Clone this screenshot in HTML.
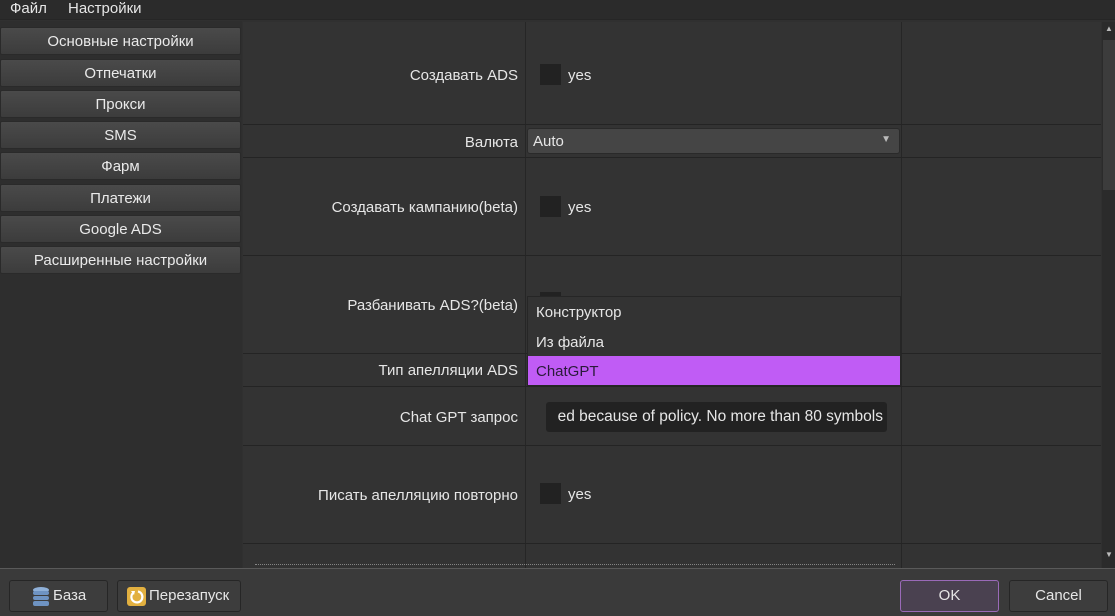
<!DOCTYPE html><html><head><meta charset="utf-8"><style>
*{box-sizing:border-box;margin:0;padding:0}
body{width:1115px;height:616px;background:#303030;font-family:"Liberation Sans",sans-serif;font-size:15px;color:#e6e6e6;position:relative;overflow:hidden}
.a{position:absolute}
.menu{left:0;top:0;width:1115px;height:20px;background:#2b2b2b;border-bottom:1px solid #262626}
.lb{left:0;width:241px;height:28px;background:linear-gradient(#4a4a4a,#3c3c3c);border:1px solid #2a2a2a;border-radius:2px;text-align:center;line-height:27px;color:#eaeaea}
.hl{height:1px;background:#242424;left:243px;width:858px}
.vl{width:1px;background:#262626}
.lab{right:597px;text-align:right;color:#e6e6e6}
.cb{width:21px;height:21px;background:#222}
.btn{background:#3d3d3d;border:1px solid #262626;border-radius:3px;height:32px;line-height:30px;text-align:center}
</style></head><body>
<div class="a menu"><span class="a" style="left:10px;top:0">Файл</span><span class="a" style="left:68px;top:0">Настройки</span></div>
<div class="a" style="left:0;top:21px;width:242px;height:547px;background:#2e2e2e"></div>
<div class="a lb" style="top:27px">Основные настройки</div>
<div class="a lb" style="top:59px">Отпечатки</div>
<div class="a lb" style="top:90px">Прокси</div>
<div class="a lb" style="top:121px">SMS</div>
<div class="a lb" style="top:152px">Фарм</div>
<div class="a lb" style="top:184px">Платежи</div>
<div class="a lb" style="top:215px">Google ADS</div>
<div class="a lb" style="top:246px">Расширенные настройки</div>
<div class="a" style="left:243px;top:22px;width:858px;height:546px;background:#333"></div>
<div class="a vl" style="left:525px;top:22px;height:546px"></div>
<div class="a vl" style="left:901px;top:22px;height:546px"></div>
<div class="a hl" style="top:124px"></div><div class="a hl" style="top:157px"></div><div class="a hl" style="top:255px"></div><div class="a hl" style="top:353px"></div><div class="a hl" style="top:386px"></div><div class="a hl" style="top:445px"></div><div class="a hl" style="top:543px"></div>
<div class="a lab" style="top:67px">Создавать ADS</div>
<div class="a cb" style="left:540px;top:64px"></div><div class="a" style="left:568px;top:67px">yes</div>
<div class="a lab" style="top:134px">Валюта</div>
<div class="a" style="left:527px;top:128px;width:373px;height:26px;background:#454545;border:1px solid #2a2a2a;border-radius:3px"><span class="a" style="left:5px;top:4px">Auto</span><span class="a" style="right:8px;top:5px;font-size:10px;color:#bbb">▼</span></div>
<div class="a lab" style="top:199px">Создавать кампанию(beta)</div>
<div class="a cb" style="left:540px;top:196px"></div><div class="a" style="left:568px;top:199px">yes</div>
<div class="a lab" style="top:297px">Разбанивать ADS?(beta)</div>
<div class="a cb" style="left:540px;top:292px"></div>
<div class="a lab" style="top:362px">Тип апелляции ADS</div>
<div class="a lab" style="top:409px">Chat GPT запрос</div>
<div class="a" style="left:546px;top:402px;width:341px;height:30px;overflow:hidden;background:#222;border-radius:3px"><span class="a" style="right:4px;top:6px;white-space:nowrap;font-size:15.5px">ed because of policy. No more than 80 symbols</span></div>
<div class="a lab" style="top:487px">Писать апелляцию повторно</div>
<div class="a cb" style="left:540px;top:483px"></div><div class="a" style="left:568px;top:486px">yes</div>
<div class="a" style="left:527px;top:296px;width:374px;height:90px;background:#333;border:1px solid #262626"></div>
<div class="a" style="left:536px;top:304px">Конструктор</div>
<div class="a" style="left:536px;top:334px">Из файла</div>
<div class="a" style="left:528px;top:356px;width:372px;height:29px;background:#c05cf5"><span class="a" style="left:8px;top:7px;color:#2a1a3a">ChatGPT</span></div>
<div class="a" style="left:255px;top:564px;width:640px;height:2px;border-top:1px dotted #bbb;opacity:.6"></div>
<div class="a" style="left:1102px;top:22px;width:13px;height:546px;background:#2b2b2b"></div>
<div class="a" style="left:1103px;top:40px;width:12px;height:150px;background:#3c3c3c"></div>
<div class="a" style="left:1105px;top:24px;font-size:8px;color:#bbb">▲</div>
<div class="a" style="left:1105px;top:550px;font-size:8px;color:#bbb">▼</div>
<div class="a" style="left:0;top:568px;width:1115px;height:48px;background:#3a3a3a;border-top:1px solid #5a5a5a"></div>
<div class="a btn" style="left:9px;top:580px;width:99px"><svg class="a" style="left:22px;top:5px" width="18" height="21" viewBox="0 0 18 21"><ellipse cx="9" cy="4" rx="8" ry="3" fill="#8fb0d8"/><rect x="1" y="5" width="16" height="4" rx="2" fill="#6e93c2"/><rect x="1" y="10" width="16" height="4" rx="2" fill="#6e93c2"/><rect x="1" y="15" width="16" height="5" rx="2" fill="#6e93c2"/></svg><span class="a" style="left:43px;top:0">База</span></div>
<div class="a btn" style="left:117px;top:580px;width:124px"><svg class="a" style="left:9px;top:6px" width="19" height="19" viewBox="0 0 19 19"><rect width="19" height="19" rx="3" fill="#e2b040"/><path d="M6 6 A5.5 5.5 0 1 0 11 4.5" fill="none" stroke="#fff" stroke-width="2.2"/><path d="M4 4 L8 4 L7 8 Z" fill="#fff"/></svg><span class="a" style="left:31px;top:0">Перезапуск</span></div>
<div class="a btn" style="left:900px;top:580px;width:99px;background:#4a4150;border-color:#9a6ab8">OK</div>
<div class="a btn" style="left:1009px;top:580px;width:99px">Cancel</div>
</body></html>
